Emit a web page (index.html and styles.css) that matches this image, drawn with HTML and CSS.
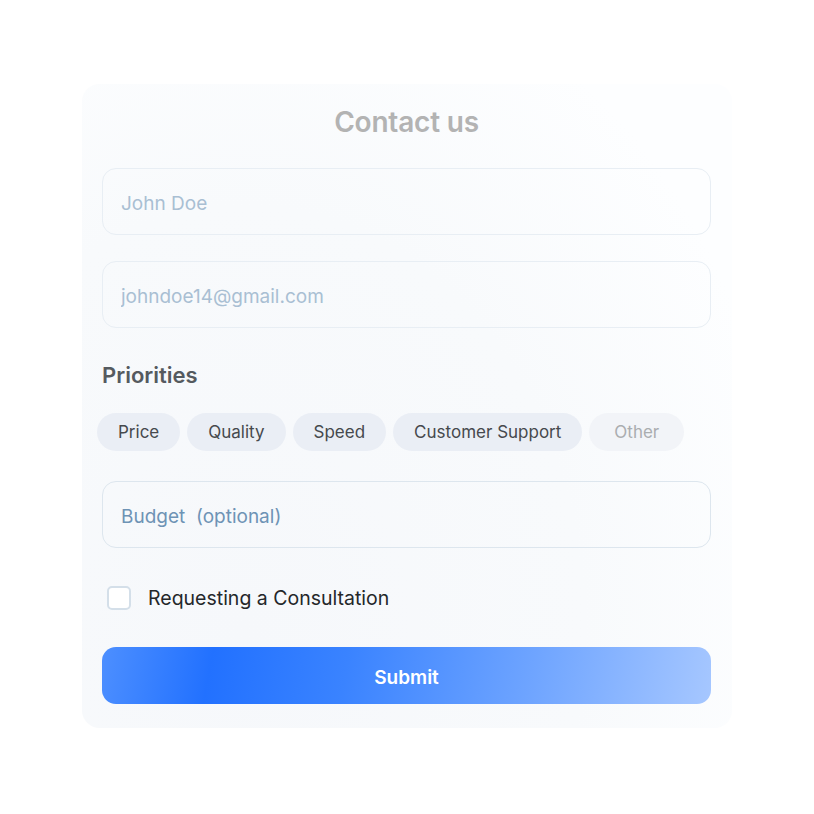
FILE: index.html
```html
<!DOCTYPE html>
<html lang="en">
<head>
    <meta charset="UTF-8">
    <meta name="viewport" content="width=device-width, initial-scale=1.0">
    <title>Contact us</title>
    <link rel="stylesheet" href="styles.css">
</head>
<body>
    <main class="page">
        <form class="contact-card">
            <h1 class="title">Contact us</h1>

            <div class="field">
                <input type="text" placeholder="John Doe">
            </div>
            <div class="field">
                <input type="email" placeholder="johndoe14@gmail.com">
            </div>

            <h2 class="section-title">Priorities</h2>
            <div class="chips">
                <span class="chip">Price</span>
                <span class="chip">Quality</span>
                <span class="chip">Speed</span>
                <span class="chip">Customer Support</span>
                <span class="chip chip-muted">Other</span>
            </div>

            <div class="field field-budget">
                <input type="text" placeholder="Budget  (optional)">
            </div>

            <label class="check-row">
                <span class="checkbox"></span>
                <span class="check-label">Requesting a Consultation</span>
            </label>

            <button type="button" class="submit">Submit</button>
        </form>
    </main>
</body>
</html>
```

FILE: styles.css
```css
* {
    margin: 0;
    padding: 0;
    box-sizing: border-box;
}
body {
    font-family: 'Inter', 'Liberation Sans', sans-serif;
    background: #fff;
    min-height: 100vh;
    color: #222;
}
.page {
    padding: 84px 0 0 82px;
}
.contact-card {
    width: 650px;
    padding: 22px 21px 24px 20px;
    border-radius: 18px;
    background:
        radial-gradient(ellipse 95% 120% at 25% 85%, #f6f8fb 0%, #f8fafc 55%, rgba(255,255,255,0) 90%),
        #fdfeff;
    display: flex;
    flex-direction: column;
}
.title {
    text-align: center;
    font-size: 28px;
    line-height: 32px;
    font-weight: 600;
    color: #b3b3b3;
    letter-spacing: -0.2px;
    margin-bottom: 30px;
}
.field {
    margin-bottom: 26px;
}
.field input {
    width: 100%;
    height: 67px;
    padding: 3px 18px 0;
    border: 1.5px solid #e8eef4;
    border-radius: 14px;
    background: transparent;
    font-family: inherit;
    font-size: 19px;
    color: #333;
    outline: none;
}
.field input::placeholder {
    color: #a9bfd3;
}
.field-budget {
    margin-bottom: 38px;
}
.field-budget input {
    border-color: #dde6ee;
}
.field-budget input::placeholder {
    color: #6e93b5;
    white-space: pre;
}
.section-title {
    font-size: 22px;
    line-height: 28px;
    font-weight: 600;
    color: #555a5f;
    margin-top: 7px;
    margin-bottom: 24px;
}
.chips {
    display: flex;
    gap: 7px;
    margin-left: -5px;
    margin-bottom: 30px;
}
.chip {
    height: 38px;
    padding: 0 21px;
    border-radius: 19px;
    background: #eaeef5;
    color: #46494d;
    font-size: 17px;
    display: flex;
    align-items: center;
}
.chip-muted {
    background: #f2f4f8;
    color: #aaadb0;
    padding: 0 25px;
}
.check-row {
    display: flex;
    align-items: center;
    gap: 17px;
    padding-left: 5px;
    margin-bottom: 37px;
}
.checkbox {
    width: 24px;
    height: 24px;
    border: 2px solid #d4dfe9;
    border-radius: 5px;
    background: #fff;
}
.check-label {
    font-size: 19.5px;
    color: #24272a;
}
.submit {
    height: 57px;
    padding-top: 3px;
    border: none;
    border-radius: 14px;
    background: linear-gradient(100deg, #4d8fff 0%, #2271ff 18%, #3a83ff 40%, #6ea4ff 70%, #a6c7ff 100%);
    color: #fff;
    font-family: inherit;
    font-size: 19px;
    font-weight: 600;
    cursor: pointer;
}
```
